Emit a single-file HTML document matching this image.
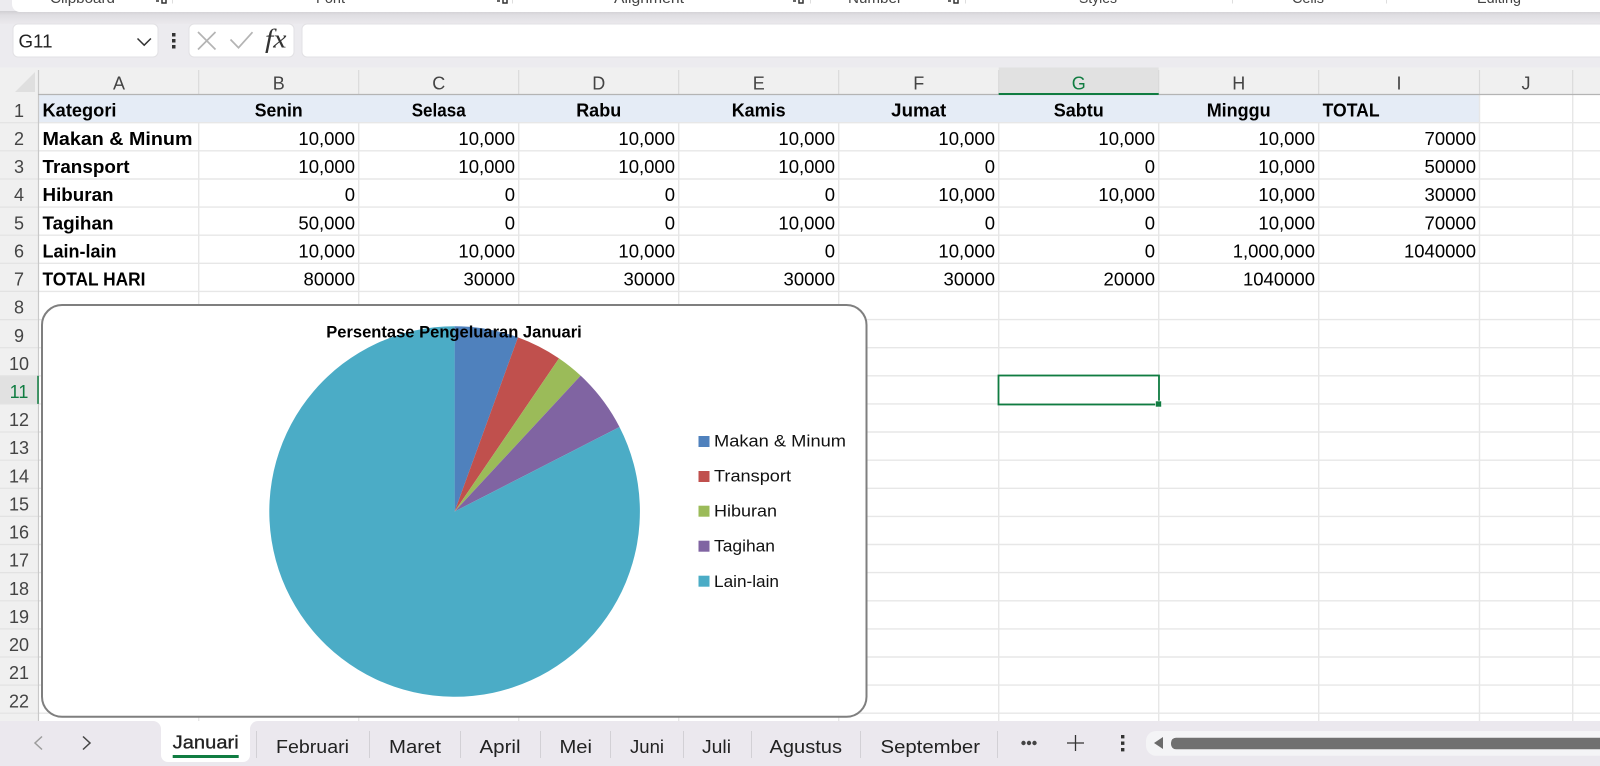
<!DOCTYPE html>
<html><head><meta charset="utf-8"><title>Sheet</title>
<style>
html,body{margin:0;padding:0;background:#fff;width:1600px;height:766px;overflow:hidden}
svg{display:block}
text{font-family:"Liberation Sans",sans-serif}
.c{font-size:18.5px;fill:#000}
.b{font-size:18.5px;font-weight:bold;fill:#000}
.h{font-size:18px;fill:#444}
.t{font-size:18px;fill:#222}
.l{font-size:17px;fill:#111}
.r{font-size:15px;fill:#444}
</style></head><body>
<svg width="1600" height="766" viewBox="0 0 1600 766" xmlns="http://www.w3.org/2000/svg">
<defs><linearGradient id="sh" x1="0" y1="0" x2="0" y2="1"><stop offset="0" stop-color="#d0cfd3"/><stop offset=".3" stop-color="#dfdee2"/><stop offset="1" stop-color="#ebe9ed"/></linearGradient></defs>
<!-- backgrounds -->
<rect width="1600" height="68" fill="#ecebef"/>
<rect y="11" width="1600" height="13" fill="url(#sh)"/>
<rect x="12" y="-20" width="1600" height="32" rx="8" fill="#fff"/>
<!-- ribbon labels -->
<text class="r" x="50" y="3" textLength="65" lengthAdjust="spacingAndGlyphs">Clipboard</text>
<text class="r" x="316" y="3" textLength="29" lengthAdjust="spacingAndGlyphs">Font</text>
<text class="r" x="614" y="3" textLength="70" lengthAdjust="spacingAndGlyphs">Alignment</text>
<text class="r" x="848" y="3" textLength="54" lengthAdjust="spacingAndGlyphs">Number</text>
<text class="r" x="1079" y="3" textLength="38" lengthAdjust="spacingAndGlyphs">Styles</text>
<text class="r" x="1292" y="3" textLength="32" lengthAdjust="spacingAndGlyphs">Cells</text>
<text class="r" x="1477" y="3" textLength="44" lengthAdjust="spacingAndGlyphs">Editing</text>
<g fill="none" stroke="#333" stroke-width="1.500">
<path d="M156 1h3M162 0v3h4V0"/>
<path d="M497 1h3M503 0v3h4V0"/>
<path d="M793 1h3M799 0v3h4V0"/>
<path d="M948 1h3M954 0v3h4V0"/>
</g>
<path d="M172.500 0v3.500M512.500 0v3.500M810.500 0v3.500M965.500 0v3.500M1232.500 0v3.500M1386.500 0v3.500" stroke="#dedede" stroke-width="1"/>
<!-- formula bar -->
<rect x="13" y="24" width="145" height="33" rx="5" fill="#fff" stroke="#e2e1e4"/>
<text x="18.500" y="47.700" font-size="18.500" fill="#222" textLength="34" lengthAdjust="spacingAndGlyphs">G11</text>
<path d="M137.500 38.500l6.700 6.700 6.700-6.700" fill="none" stroke="#333" stroke-width="1.500"/>
<g fill="#333"><rect x="172" y="33" width="3.500" height="3.500"/><rect x="172" y="39" width="3.500" height="3.500"/><rect x="172" y="45" width="3.500" height="3.500"/></g>
<rect x="189" y="24" width="105" height="33" rx="5" fill="#fff" stroke="#e2e1e4"/>
<path d="M198 32l17.500 17.500M215.500 32L198 49.500" stroke="#b4b4b4" stroke-width="1.700" fill="none"/>
<path d="M230.500 39.500l8 8.200 14-15.500" stroke="#b4b4b4" stroke-width="1.700" fill="none"/>
<text x="265" y="47.500" font-size="26" font-style="italic" fill="#333" textLength="21.500" lengthAdjust="spacingAndGlyphs" style="font-family:'Liberation Serif',serif">fx</text>
<rect x="302" y="24" width="1320" height="33" rx="5" fill="#fff" stroke="#e2e1e4"/>
<!-- sheet -->
<rect y="67.500" width="1600" height="654" fill="#fff"/>
<rect y="67.500" width="1600" height="27" fill="#f0f0f0"/>
<rect y="67.500" width="38" height="654" fill="#f0f0f0"/>
<rect x="998.700" y="67.500" width="160" height="27" fill="#e1e1e1"/>
<rect y="375.800" width="38" height="28.100" fill="#e1e1e1"/>
<path d="M35 72v20H15z" fill="#dfdfdf"/>
<rect x="39" y="95" width="1440.500" height="27.700" fill="#e5ecf6"/>
<!-- grid -->
<path d="M38 122.700H1600M38 150.800H1600M38 179H1600M38 207.100H1600M38 235.200H1600M38 263.300H1600M38 291.400H1600M38 319.600H1600M38 347.700H1600M38 375.800H1600M38 403.900H1600M38 432H1600M38 460.200H1600M38 488.300H1600M38 516.400H1600M38 544.500H1600M38 572.600H1600M38 600.800H1600M38 628.900H1600M38 657H1600M38 685.100H1600M38 713.200H1600" stroke="#e7e7e7" stroke-width="1.400"/>
<path d="M198.700 122V721M358.700 122V721M518.700 122V721M678.700 122V721M838.700 122V721M998.700 122V721M1158.700 122V721M1318.700 122V721M1479.500 95V721M1572.700 95V721" stroke="#e7e7e7" stroke-width="1.400"/>
<path d="M198.700 70V94M358.700 70V94M518.700 70V94M678.700 70V94M838.700 70V94M998.700 70V94M1158.700 70V94M1318.700 70V94M1479.500 70V94M1572.700 70V94" stroke="#dadada" stroke-width="1.200"/>
<path d="M0 122.700H38M0 150.800H38M0 179H38M0 207.100H38M0 235.200H38M0 263.300H38M0 291.400H38M0 319.600H38M0 347.700H38M0 375.800H38M0 403.900H38M0 432H38M0 460.200H38M0 488.300H38M0 516.400H38M0 544.500H38M0 572.600H38M0 600.800H38M0 628.900H38M0 657H38M0 685.100H38M0 713.200H38" stroke="#e2e2e2" stroke-width="1.200"/>
<path d="M38.500 70V721" stroke="#c8c8c8" stroke-width="1.200"/>
<path d="M38 94.500H1600" stroke="#b4b4b4" stroke-width="1.200"/>
<path d="M998.700 94H1158.700" stroke="#107c41" stroke-width="2"/>
<path d="M38 375.800V403.900" stroke="#107c41" stroke-width="1.500"/>
<!-- column letters -->
<g text-anchor="middle">
<text class="h" x="119" y="89.300">A</text><text class="h" x="278.700" y="89.300">B</text><text class="h" x="438.700" y="89.300">C</text><text class="h" x="598.700" y="89.300">D</text><text class="h" x="758.700" y="89.300">E</text><text class="h" x="918.700" y="89.300">F</text><text class="h" x="1078.700" y="89.300" style="fill:#107c41">G</text><text class="h" x="1238.700" y="89.300">H</text><text class="h" x="1399" y="89.300">I</text><text class="h" x="1526" y="89.300">J</text>
</g>
<!-- row numbers -->
<g text-anchor="middle">
<text class="h" x="19" y="116.800">1</text><text class="h" x="19" y="144.900">2</text><text class="h" x="19" y="173">3</text><text class="h" x="19" y="201.200">4</text><text class="h" x="19" y="229.300">5</text><text class="h" x="19" y="257.400">6</text><text class="h" x="19" y="285.500">7</text><text class="h" x="19" y="313.600">8</text><text class="h" x="19" y="341.800">9</text><text class="h" x="19" y="369.900">10</text><text class="h" x="19" y="398" style="fill:#107c41">11</text><text class="h" x="19" y="426.100">12</text><text class="h" x="19" y="454.200">13</text><text class="h" x="19" y="482.400">14</text><text class="h" x="19" y="510.500">15</text><text class="h" x="19" y="538.600">16</text><text class="h" x="19" y="566.700">17</text><text class="h" x="19" y="594.900">18</text><text class="h" x="19" y="623">19</text><text class="h" x="19" y="651.100">20</text><text class="h" x="19" y="679.200">21</text><text class="h" x="19" y="707.400">22</text>
</g>
<!-- headers -->
<text class="b" x="42.500" y="116.600" textLength="74" lengthAdjust="spacingAndGlyphs">Kategori</text>
<g text-anchor="middle">
<text class="b" x="278.700" y="116.600" textLength="48" lengthAdjust="spacingAndGlyphs">Senin</text>
<text class="b" x="438.700" y="116.600" textLength="54" lengthAdjust="spacingAndGlyphs">Selasa</text>
<text class="b" x="598.700" y="116.600" textLength="45" lengthAdjust="spacingAndGlyphs">Rabu</text>
<text class="b" x="758.700" y="116.600" textLength="54" lengthAdjust="spacingAndGlyphs">Kamis</text>
<text class="b" x="918.700" y="116.600" textLength="55" lengthAdjust="spacingAndGlyphs">Jumat</text>
<text class="b" x="1078.700" y="116.600" textLength="50" lengthAdjust="spacingAndGlyphs">Sabtu</text>
<text class="b" x="1238.700" y="116.600" textLength="64" lengthAdjust="spacingAndGlyphs">Minggu</text>
</g>
<text class="b" x="1322.600" y="116.600" textLength="57" lengthAdjust="spacingAndGlyphs">TOTAL</text>
<!-- row labels -->
<text class="b" x="42.500" y="144.900" textLength="150" lengthAdjust="spacingAndGlyphs">Makan &amp; Minum</text>
<text class="b" x="42.500" y="173" textLength="87" lengthAdjust="spacingAndGlyphs">Transport</text>
<text class="b" x="42.500" y="201.200" textLength="71" lengthAdjust="spacingAndGlyphs">Hiburan</text>
<text class="b" x="42.500" y="229.300" textLength="71" lengthAdjust="spacingAndGlyphs">Tagihan</text>
<text class="b" x="42.500" y="257.400" textLength="74" lengthAdjust="spacingAndGlyphs">Lain-lain</text>
<text class="b" x="42.500" y="285.500" textLength="103" lengthAdjust="spacingAndGlyphs">TOTAL HARI</text>
<!-- numbers -->
<g text-anchor="end">
<text class="c" x="355" y="144.900">10,000</text><text class="c" x="515" y="144.900">10,000</text><text class="c" x="675" y="144.900">10,000</text><text class="c" x="835" y="144.900">10,000</text><text class="c" x="995" y="144.900">10,000</text><text class="c" x="1155" y="144.900">10,000</text><text class="c" x="1315" y="144.900">10,000</text><text class="c" x="1476" y="144.900">70000</text>
<text class="c" x="355" y="173">10,000</text><text class="c" x="515" y="173">10,000</text><text class="c" x="675" y="173">10,000</text><text class="c" x="835" y="173">10,000</text><text class="c" x="995" y="173">0</text><text class="c" x="1155" y="173">0</text><text class="c" x="1315" y="173">10,000</text><text class="c" x="1476" y="173">50000</text>
<text class="c" x="355" y="201.200">0</text><text class="c" x="515" y="201.200">0</text><text class="c" x="675" y="201.200">0</text><text class="c" x="835" y="201.200">0</text><text class="c" x="995" y="201.200">10,000</text><text class="c" x="1155" y="201.200">10,000</text><text class="c" x="1315" y="201.200">10,000</text><text class="c" x="1476" y="201.200">30000</text>
<text class="c" x="355" y="229.300">50,000</text><text class="c" x="515" y="229.300">0</text><text class="c" x="675" y="229.300">0</text><text class="c" x="835" y="229.300">10,000</text><text class="c" x="995" y="229.300">0</text><text class="c" x="1155" y="229.300">0</text><text class="c" x="1315" y="229.300">10,000</text><text class="c" x="1476" y="229.300">70000</text>
<text class="c" x="355" y="257.400">10,000</text><text class="c" x="515" y="257.400">10,000</text><text class="c" x="675" y="257.400">10,000</text><text class="c" x="835" y="257.400">0</text><text class="c" x="995" y="257.400">10,000</text><text class="c" x="1155" y="257.400">0</text><text class="c" x="1315" y="257.400">1,000,000</text><text class="c" x="1476" y="257.400">1040000</text>
<text class="c" x="355" y="285.500">80000</text><text class="c" x="515" y="285.500">30000</text><text class="c" x="675" y="285.500">30000</text><text class="c" x="835" y="285.500">30000</text><text class="c" x="995" y="285.500">30000</text><text class="c" x="1155" y="285.500">20000</text><text class="c" x="1315" y="285.500">1040000</text>
</g>
<!-- selection -->
<rect x="998.500" y="375.500" width="160.500" height="29" fill="none" stroke="#107c41" stroke-width="1.800"/>
<rect x="1155.500" y="401" width="6" height="6" fill="#107c41" stroke="#fff" stroke-width=".6"/>
<!-- chart -->
<rect x="42" y="305" width="824.500" height="411.800" rx="20" fill="#fff" stroke="#7f7f7f" stroke-width="2"/>
<path d="M454.600 511.500V326.200A185.300 185.300 0 0 1 517.980 337.370Z" fill="#4f81bd"/>
<path d="M454.600 511.500L517.980 337.370A185.300 185.300 0 0 1 559 358.410Z" fill="#c0504d"/>
<path d="M454.600 511.500L559 358.410A185.300 185.300 0 0 1 580.640 375.670Z" fill="#9bbb59"/>
<path d="M454.600 511.500L580.640 375.670A185.300 185.300 0 0 1 619.500 426.980Z" fill="#8064a2"/>
<path d="M454.600 511.500L619.500 426.980A185.300 185.300 0 1 1 454.600 326.200Z" fill="#4bacc6"/>
<text x="454" y="337.700" text-anchor="middle" font-size="16.500" font-weight="bold" fill="#000" textLength="255.500" lengthAdjust="spacingAndGlyphs">Persentase Pengeluaran Januari</text>
<rect x="698.500" y="436" width="11" height="11" fill="#4f81bd"/><text class="l" x="714" y="446.700" textLength="132" lengthAdjust="spacingAndGlyphs">Makan &amp; Minum</text>
<rect x="698.500" y="471" width="11" height="11" fill="#c0504d"/><text class="l" x="714" y="481.700" textLength="77" lengthAdjust="spacingAndGlyphs">Transport</text>
<rect x="698.500" y="505.700" width="11" height="11" fill="#9bbb59"/><text class="l" x="714" y="516.700" textLength="63" lengthAdjust="spacingAndGlyphs">Hiburan</text>
<rect x="698.500" y="540.700" width="11" height="11" fill="#8064a2"/><text class="l" x="714" y="551.700" textLength="61" lengthAdjust="spacingAndGlyphs">Tagihan</text>
<rect x="698.500" y="575.700" width="11" height="11" fill="#4bacc6"/><text class="l" x="714" y="587" textLength="65" lengthAdjust="spacingAndGlyphs">Lain-lain</text>
<!-- tabs -->
<path d="M0 721H153a8 8 0 0 1 8 8V755a7 7 0 0 0 7 7H243a7 7 0 0 0 7-7V729a8 8 0 0 1 8-8H1600V766H0Z" fill="#ebe8ee"/>
<path d="M42 736.500L35 743l7 6.500" fill="none" stroke="#9c9c9c" stroke-width="1.500"/>
<path d="M83 736.500l7 6.500-7 6.500" fill="none" stroke="#444" stroke-width="1.500"/>
<text x="172.700" y="748.300" font-size="18.500" fill="#222" stroke="#222" stroke-width=".3" textLength="66" lengthAdjust="spacingAndGlyphs">Januari</text>
<rect x="172.700" y="755" width="66" height="3" fill="#107c41"/>
<text class="t" x="276" y="753" textLength="73" lengthAdjust="spacingAndGlyphs">Februari</text>
<text class="t" x="389" y="753" textLength="52" lengthAdjust="spacingAndGlyphs">Maret</text>
<text class="t" x="479.500" y="753" textLength="41" lengthAdjust="spacingAndGlyphs">April</text>
<text class="t" x="559.500" y="753" textLength="32.500" lengthAdjust="spacingAndGlyphs">Mei</text>
<text class="t" x="630" y="753" textLength="34" lengthAdjust="spacingAndGlyphs">Juni</text>
<text class="t" x="702" y="753" textLength="29" lengthAdjust="spacingAndGlyphs">Juli</text>
<text class="t" x="769.500" y="753" textLength="72.500" lengthAdjust="spacingAndGlyphs">Agustus</text>
<text class="t" x="880.500" y="753" textLength="99.500" lengthAdjust="spacingAndGlyphs">September</text>
<path d="M256.500 731v27M369.500 731v27M460.500 731v27M540.500 731v27M610.500 731v27M683.500 731v27M751.500 731v27M860.500 731v27M997.500 731v27" stroke="#d2d0d5" stroke-width="1"/>
<g fill="#444"><circle cx="1023.500" cy="743" r="2.200"/><circle cx="1029" cy="743" r="2.200"/><circle cx="1034.500" cy="743" r="2.200"/></g>
<path d="M1075.500 735v16M1067 743h17" stroke="#333" stroke-width="1.300"/>
<g fill="#333"><rect x="1121" y="735" width="3.400" height="3.400"/><rect x="1121" y="741.500" width="3.400" height="3.400"/><rect x="1121" y="748" width="3.400" height="3.400"/></g>
<rect x="1146" y="731" width="500" height="24.700" rx="10" fill="#f4f4f6"/>
<path d="M1163 737v12l-9-6z" fill="#6b6b6b"/>
<rect x="1171" y="737.700" width="480" height="11.600" rx="5" fill="#707070"/>
</svg>
</body></html>
